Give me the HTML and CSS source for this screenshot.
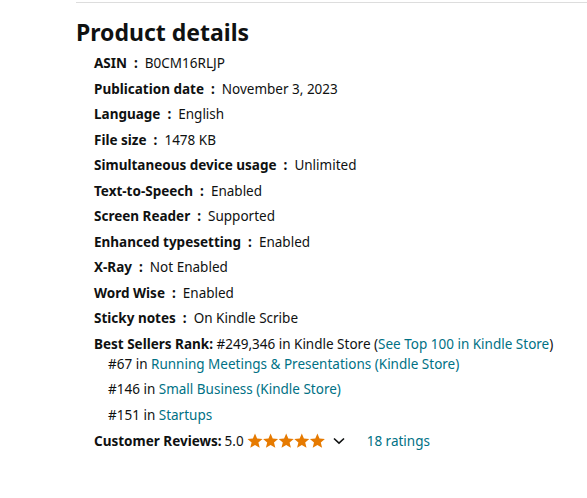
FILE: index.html
```html
<!DOCTYPE html>
<html>
<head>
<meta charset="utf-8">
<link rel="stylesheet" href="styles.css">
</head>
<body>
<div class="section">
  <hr class="divider">
  <h2 class="title">Product details</h2>
  <ul class="details">
    <li><span class="label">ASIN&nbsp; : &nbsp;</span><span>B0CM16RLJP</span></li>
    <li><span class="label">Publication date&nbsp; : &nbsp;</span><span>November 3, 2023</span></li>
    <li><span class="label">Language&nbsp; : &nbsp;</span><span>English</span></li>
    <li><span class="label">File size&nbsp; : &nbsp;</span><span>1478 KB</span></li>
    <li><span class="label">Simultaneous device usage&nbsp; : &nbsp;</span><span>Unlimited</span></li>
    <li><span class="label">Text-to-Speech&nbsp; : &nbsp;</span><span>Enabled</span></li>
    <li><span class="label">Screen Reader&nbsp; : &nbsp;</span><span>Supported</span></li>
    <li><span class="label">Enhanced typesetting&nbsp; : &nbsp;</span><span>Enabled</span></li>
    <li><span class="label">X-Ray&nbsp; : &nbsp;</span><span>Not Enabled</span></li>
    <li><span class="label">Word Wise&nbsp; : &nbsp;</span><span>Enabled</span></li>
    <li><span class="label">Sticky notes&nbsp; : &nbsp;</span><span>On Kindle Scribe</span></li>
  </ul>
  <ul class="details">
    <li><span class="label">Best Sellers Rank:</span> #249,346 in Kindle Store (<a class="link" href="#">See Top 100 in Kindle Store</a>)
      <ul class="ranks">
        <li>#67 in <a class="link" href="#">Running Meetings &amp; Presentations (Kindle Store)</a></li>
        <li>#146 in <a class="link" href="#">Small Business (Kindle Store)</a></li>
        <li>#151 in <a class="link" href="#">Startups</a></li>
      </ul>
    </li>
  </ul>
  <ul class="details">
    <li class="reviews"><span class="label">Customer Reviews:</span>
      <span class="score">5.0</span>
      <span class="stars">
        <svg width="78" height="16" viewBox="0 0 78 16">
          <defs>
            <path id="st" d="M8 0.6 L10.1 5.6 L15.5 6 L11.4 9.5 L12.7 14.8 L8 12 L3.3 14.8 L4.6 9.5 L0.5 6 L5.9 5.6 Z" fill="#E67A00"/>
          </defs>
          <use href="#st" x="0"/>
          <use href="#st" x="15.6"/>
          <use href="#st" x="31.2"/>
          <use href="#st" x="46.8"/>
          <use href="#st" x="62.4"/>
        </svg>
      </span>
      <svg class="chev" width="12" height="8" viewBox="0 0 12 8"><path d="M1 1.5 L6 6.2 L11 1.5" fill="none" stroke="#0F1111" stroke-width="1.6"/></svg>
      <a class="link ratings" href="#">18 ratings</a>
    </li>
  </ul>
</div>
</body>
</html>
```

FILE: styles.css
```css
html, body {
  margin: 0;
  padding: 0;
  background: #fff;
}
body {
  font-family: "Noto Sans", "Open Sans", sans-serif;
  font-size: 13.5px;
  line-height: 20px;
  color: #0F1111;
}
.section {
  padding: 2px 0 0 76px;
}
.divider {
  margin: 0;
  border: 0;
  border-top: 1px solid #DDD;
  height: 0;
}
.title {
  margin: 13px 0 5px 0;
  font-size: 23px;
  line-height: 32px;
  font-weight: 700;
}
.details {
  list-style: none;
  margin: 0 0 0 18px;
  padding: 0;
}
.details > li {
  margin-bottom: 5.5px;
}
.label {
  font-weight: 700;
}
.link {
  color: #007185;
  text-decoration: none;
}
.ranks {
  list-style: none;
  margin: 0 0 0 14px;
  padding: 0;
}
.ranks li {
  margin-top: 0;
  margin-bottom: 5.5px;
}
.ranks li:last-child {
  margin-bottom: 0;
}
.reviews {
  display: flex;
  align-items: center;
  margin-top: 6px;
}
.score {
  margin-left: 3px;
}
.stars {
  display: inline-flex;
  margin-left: 3px;
}
.chev {
  margin-left: 8px;
}
.ratings {
  margin-left: 22px;
}
```
